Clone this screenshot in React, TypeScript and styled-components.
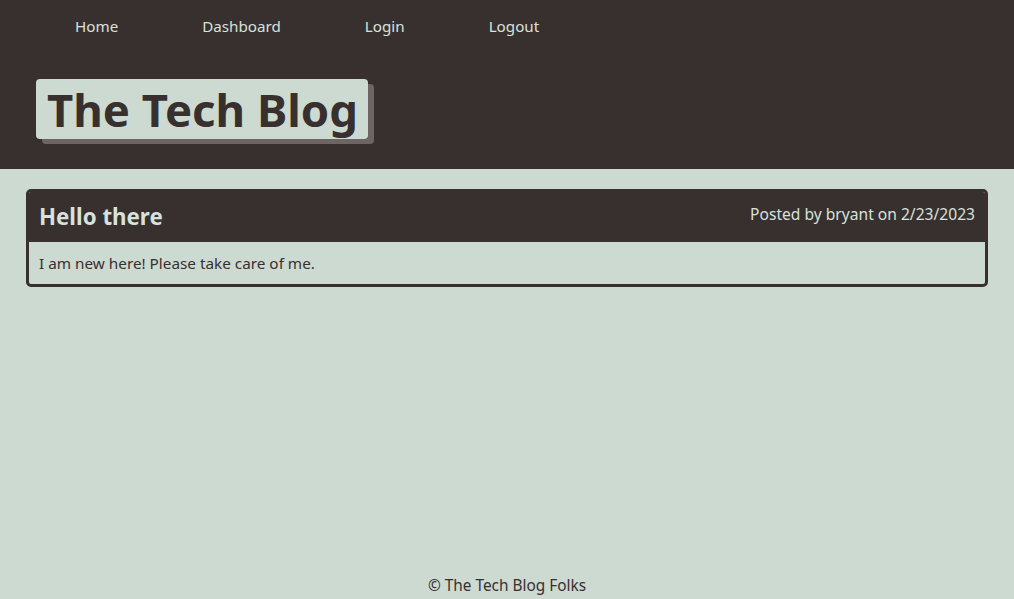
import React from "react";
import styled, { createGlobalStyle } from "styled-components";

const dark = "#382f2f";
const light = "#cddad1";
const lightText = "#d6e2dc";

const Global = createGlobalStyle`
  html, body { margin: 0; padding: 0; }
  body {
    font-family: "Noto Sans", "Open Sans", sans-serif;
    background: ${light};
    color: ${dark};
  }
`;

const Page = styled.div`
  min-height: 599px;
  display: flex;
  flex-direction: column;
`;

const Header = styled.header`
  background: ${dark};
  height: 169px;
  display: flex;
  flex-direction: column;
`;

const Nav = styled.nav`
  display: flex;
  padding: 15px 0 0 33px;
`;

const NavLink = styled.a`
  color: ${lightText};
  font-size: 15.2px;
  line-height: 22px;
  padding: 0 42px;
  text-decoration: none;
`;

const TitleWrap = styled.div`
  padding: 42px 0 0 36px;
  display: flex;
`;

const Title = styled.h1`
  margin: 0;
  background: ${light};
  color: ${dark};
  font-size: 45.5px;
  font-weight: 700;
  line-height: 60px;
  height: 60px;
  padding: 0 10px 0 11px;
  border-radius: 4px;
  box-shadow: 6px 5px 0 #6d6464;
`;

const Main = styled.main`
  flex: 1;
  padding: 20px 26px;
`;

const Card = styled.article`
  border: 3px solid ${dark};
  border-radius: 5px;
  overflow: hidden;
`;

const CardHead = styled.div`
  background: ${dark};
  height: 50px;
  display: flex;
  justify-content: space-between;
  align-items: flex-start;
  padding: 0 10px 0 10px;
`;

const PostTitle = styled.h2`
  margin: 10px 0 0;
  color: ${lightText};
  font-size: 22.3px;
  font-weight: 700;
  line-height: 30px;
`;

const Meta = styled.span`
  margin-top: 11px;
  color: ${lightText};
  font-size: 15.6px;
  line-height: 22px;
`;

const CardBody = styled.p`
  margin: 0;
  padding: 11px 10px 11px;
  font-size: 15.3px;
  line-height: 20px;
`;

const Footer = styled.footer`
  text-align: center;
  font-size: 15.4px;
  line-height: 20px;
  padding-bottom: 3px;
`;

export default function App() {
  return (
    <Page>
      <Global />
      <Header>
        <Nav>
          <NavLink href="#">Home</NavLink>
          <NavLink href="#">Dashboard</NavLink>
          <NavLink href="#">Login</NavLink>
          <NavLink href="#">Logout</NavLink>
        </Nav>
        <TitleWrap>
          <Title>The Tech Blog</Title>
        </TitleWrap>
      </Header>
      <Main>
        <Card>
          <CardHead>
            <PostTitle>Hello there</PostTitle>
            <Meta>Posted by bryant on 2/23/2023</Meta>
          </CardHead>
          <CardBody>I am new here! Please take care of me.</CardBody>
        </Card>
      </Main>
      <Footer>© The Tech Blog Folks</Footer>
    </Page>
  );
}
